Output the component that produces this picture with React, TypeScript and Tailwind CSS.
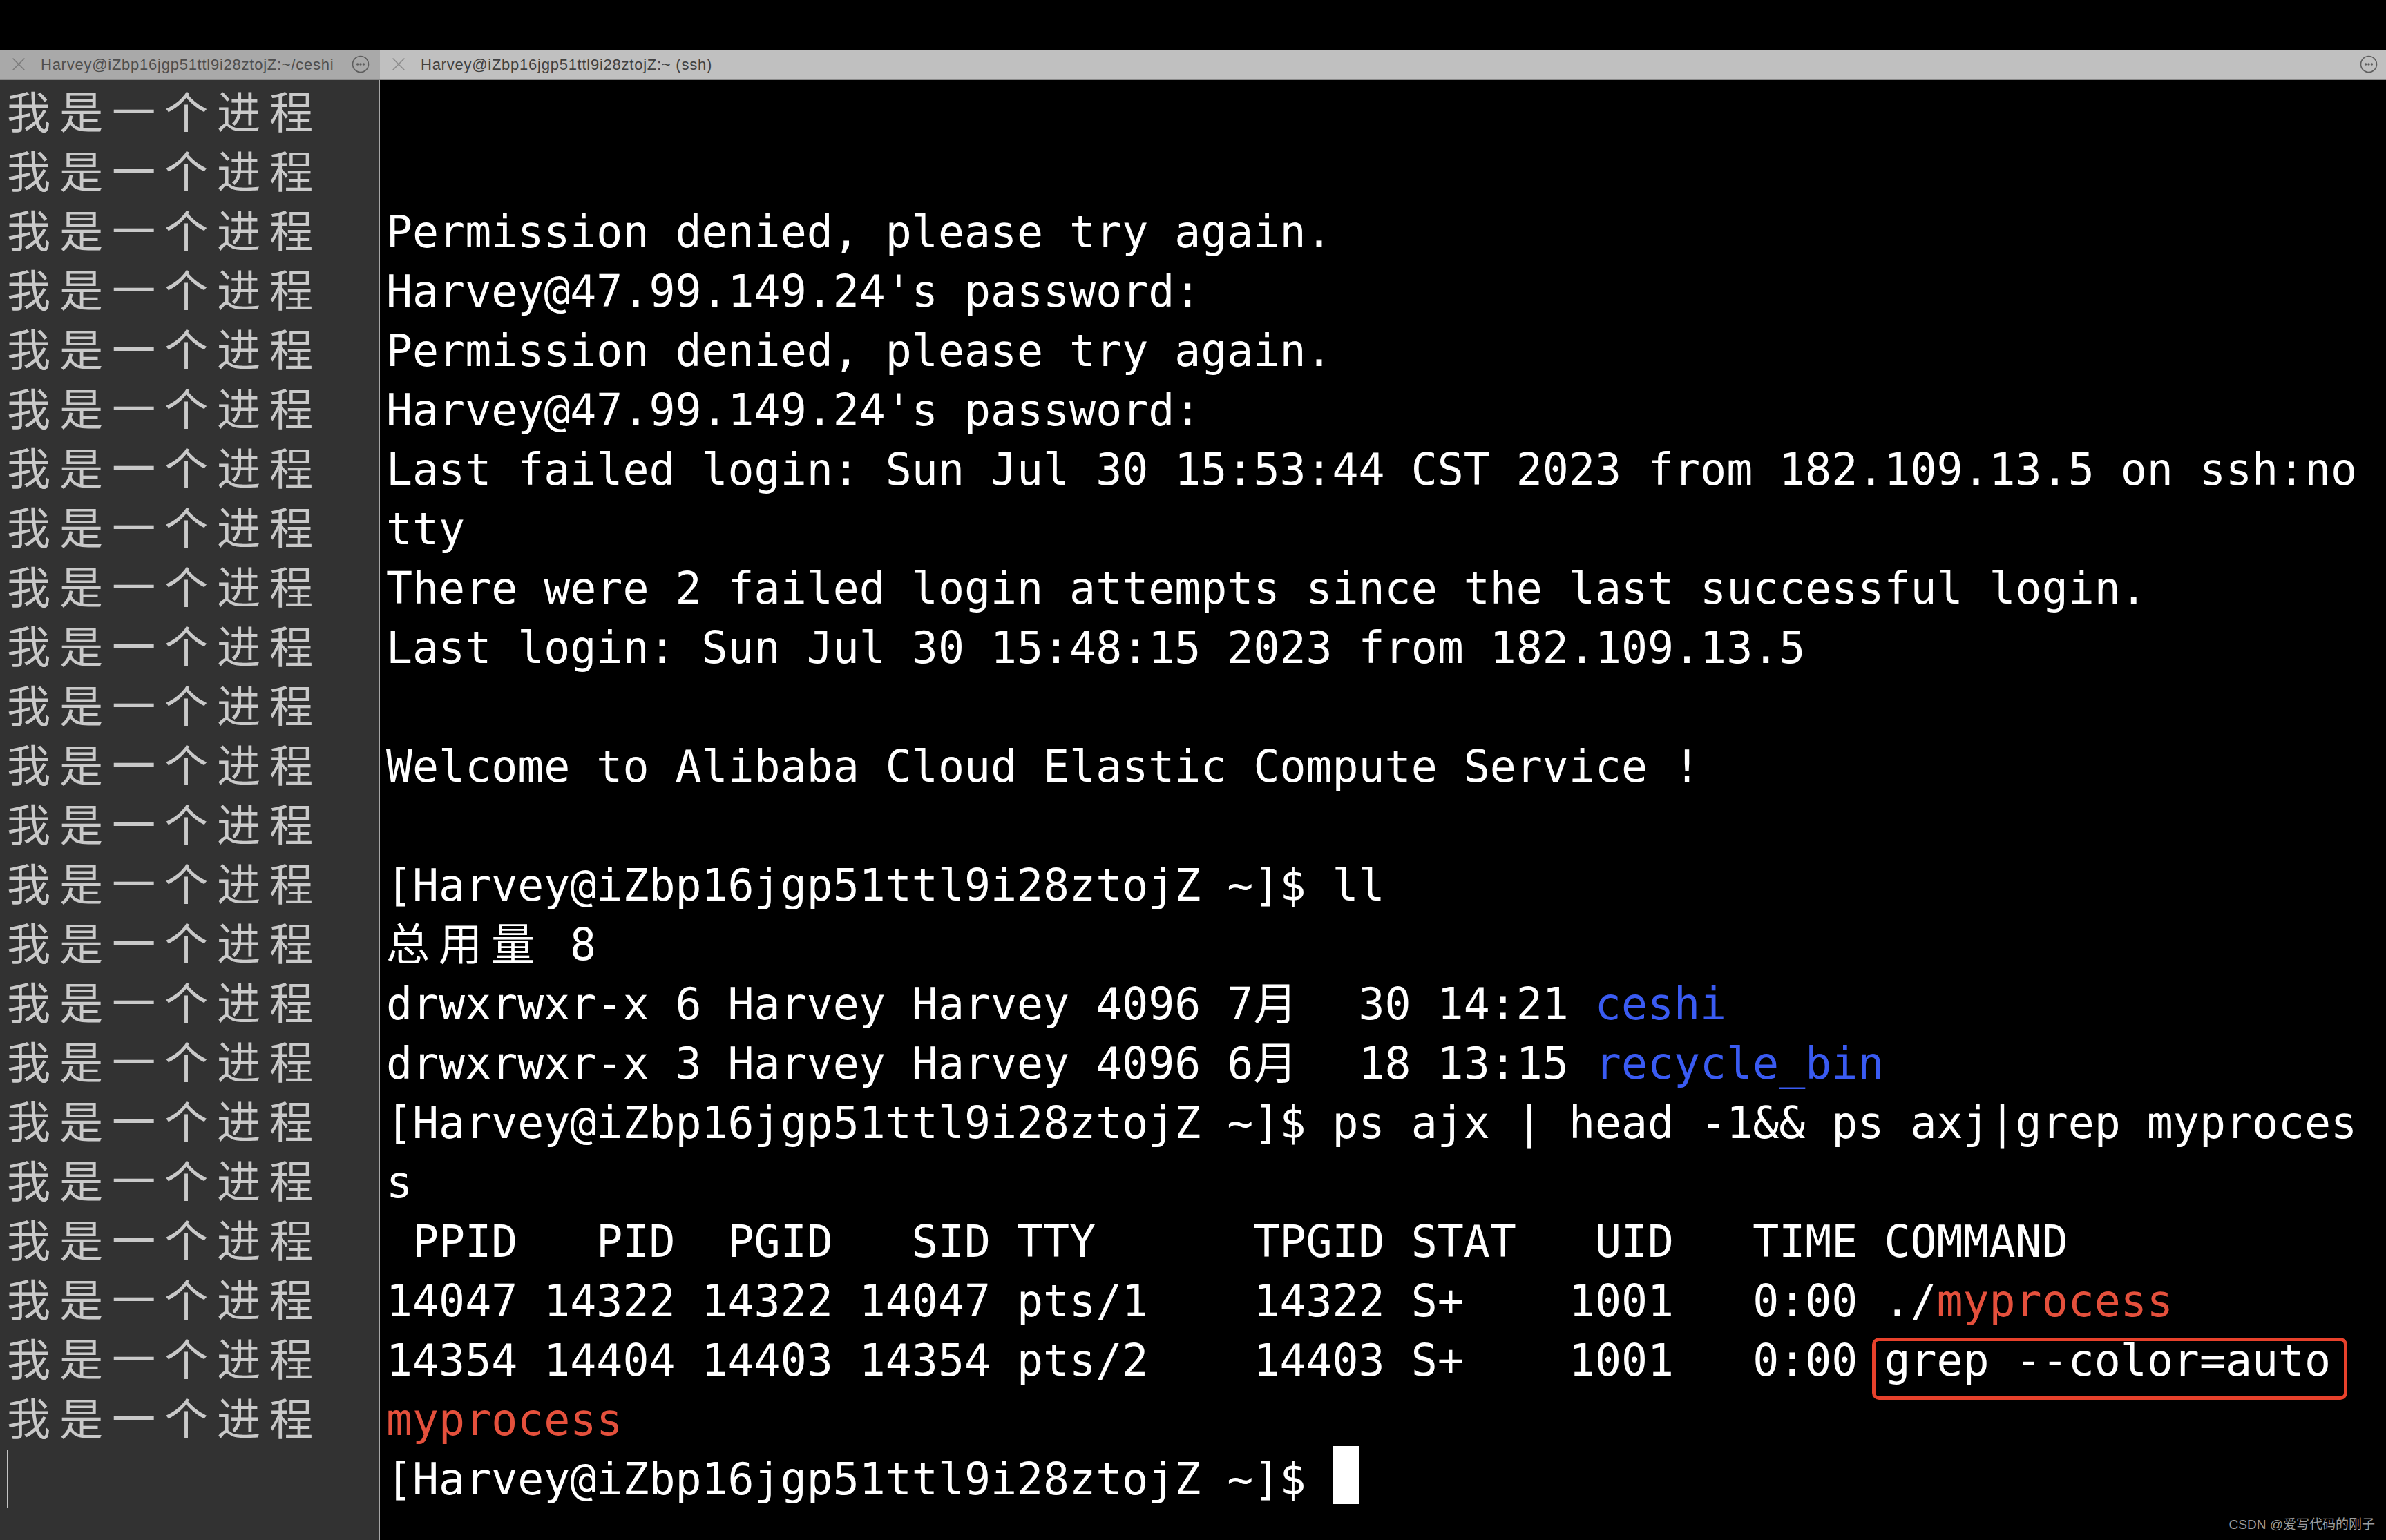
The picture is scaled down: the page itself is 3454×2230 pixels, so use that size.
import React from "react";

type Seg =
  | string
  | { t: string; cls?: string; box?: boolean }
  | { cursor: true };

const RED = "text-[#e4503c]";
const BLUE = "text-[#3a5bf2]";

const mainLines: Seg[][] = [
  [""],
  [""],
  ["Permission denied, please try again."],
  ["Harvey@47.99.149.24's password:"],
  ["Permission denied, please try again."],
  ["Harvey@47.99.149.24's password:"],
  ["Last failed login: Sun Jul 30 15:53:44 CST 2023 from 182.109.13.5 on ssh:no"],
  ["tty"],
  ["There were 2 failed login attempts since the last successful login."],
  ["Last login: Sun Jul 30 15:48:15 2023 from 182.109.13.5"],
  [""],
  ["Welcome to Alibaba Cloud Elastic Compute Service !"],
  [""],
  ["[Harvey@iZbp16jgp51ttl9i28ztojZ ~]$ ll"],
  ["总用量 8"],
  ["drwxrwxr-x 6 Harvey Harvey 4096 7月  30 14:21 ", { t: "ceshi", cls: BLUE }],
  ["drwxrwxr-x 3 Harvey Harvey 4096 6月  18 13:15 ", { t: "recycle_bin", cls: BLUE }],
  ["[Harvey@iZbp16jgp51ttl9i28ztojZ ~]$ ps ajx | head -1&& ps axj|grep myproces"],
  ["s"],
  [" PPID   PID  PGID   SID TTY      TPGID STAT   UID   TIME COMMAND"],
  ["14047 14322 14322 14047 pts/1    14322 S+    1001   0:00 ./", { t: "myprocess", cls: RED }],
  ["14354 14404 14403 14354 pts/2    14403 S+    1001   0:00 ", { t: "grep --color=auto", box: true }],
  [{ t: "myprocess", cls: RED }],
  ["[Harvey@iZbp16jgp51ttl9i28ztojZ ~]$ ", { cursor: true }],
];

const isWide = (ch: string) => /[\u2E80-\u9FFF\uFF00-\uFFEF]/.test(ch);

function renderText(s: string, key: string) {
  const out: React.ReactNode[] = [];
  let buf = "";
  let i = 0;
  for (const ch of Array.from(s)) {
    if (isWide(ch)) {
      if (buf) {
        out.push(<React.Fragment key={key + "-t" + i}>{buf}</React.Fragment>);
        buf = "";
      }
      out.push(
        <span key={key + "-w" + i} className="inline-block w-[76px]">
          {ch}
        </span>
      );
    } else {
      buf += ch;
    }
    i++;
  }
  if (buf) out.push(<React.Fragment key={key + "-end"}>{buf}</React.Fragment>);
  return out;
}

function CloseIcon({ color }: { color: string }) {
  return (
    <svg width="20" height="20" viewBox="0 0 20 20" className="shrink-0">
      <path d="M2 2 L18 18 M18 2 L2 18" stroke={color} strokeWidth="1.6" strokeLinecap="round" fill="none" />
    </svg>
  );
}

function MoreIcon() {
  return (
    <svg width="26" height="26" viewBox="0 0 26 26" className="shrink-0">
      <circle cx="13" cy="13" r="11.5" stroke="#5e5e5e" strokeWidth="1.6" fill="none" />
      <circle cx="8.6" cy="13" r="1.7" fill="#5e5e5e" />
      <circle cx="13" cy="13" r="1.7" fill="#5e5e5e" />
      <circle cx="17.4" cy="13" r="1.7" fill="#5e5e5e" />
    </svg>
  );
}

export default function App() {
  const mono = "font-['DejaVu_Sans_Mono','Noto_Sans_CJK_SC',monospace] text-[63.2px] leading-[86px]";
  return (
    <div className="relative w-[3454px] h-[2230px] bg-black flex flex-col overflow-hidden">
      <div className="h-[72px] shrink-0 bg-black" />
      <div className="h-[44px] shrink-0 flex border-b-2 border-[#8c8c8c] font-['Liberation_Sans',Arial,sans-serif] text-[22px] tracking-[0.75px]">
        <div className="w-[550px] shrink-0 bg-[#a9a9a9] flex items-center pl-[17px] pr-[15px] text-[#4e4e4e]">
          <CloseIcon color="#7b7b7b" />
          <span className="ml-[22px] flex-1 whitespace-nowrap">Harvey@iZbp16jgp51ttl9i28ztojZ:~/ceshi</span>
          <MoreIcon />
        </div>
        <div className="flex-1 bg-[#c0c0c0] flex items-center pl-[17px] pr-[12px] text-[#404040]">
          <CloseIcon color="#8c8c8c" />
          <span className="ml-[22px] flex-1 whitespace-nowrap">Harvey@iZbp16jgp51ttl9i28ztojZ:~ (ssh)</span>
          <MoreIcon />
        </div>
      </div>
      <div className="flex flex-1 min-h-0">
        <div className={`w-[550px] shrink-0 bg-[#323232] border-r-2 border-[#a6a6a6] pl-[10px] pt-[5px] text-[#c9c9c9] whitespace-pre ${mono}`}>
          {Array.from({ length: 23 }).map((_, i) => (
            <div key={i} className="h-[86px]">
              {renderText("我是一个进程", "l" + i)}
            </div>
          ))}
          <div className="h-[86px]">
            <span className="inline-block align-top w-[37px] h-[85px] border-[1.5px] border-[#c4c4c4]" />
          </div>
        </div>
        <div className={`flex-1 bg-black pl-[9px] pt-[5px] text-white whitespace-pre ${mono}`}>
          {mainLines.map((line, li) => (
            <div key={li} className="h-[86px]">
              {line.map((seg, si) => {
                const k = li + "-" + si;
                if (typeof seg === "string") return <React.Fragment key={k}>{renderText(seg, k)}</React.Fragment>;
                if ("cursor" in seg)
                  return <span key={k} className="relative -top-[5px] inline-block align-top w-[38px] h-[84px] bg-white" />;
                if (seg.box)
                  return (
                    <span key={k} className="relative inline-block">
                      {seg.t}
                      <span className="absolute left-[-17px] top-[10px] w-[688px] h-[90px] border-[5px] border-[#e8412b] rounded-[10px]" />
                    </span>
                  );
                return (
                  <span key={k} className={seg.cls}>
                    {seg.t}
                  </span>
                );
              })}
            </div>
          ))}
        </div>
      </div>
      <div className="absolute right-[16px] bottom-[12px] text-[19px] leading-[20px] text-[#9c9c9c] font-['Liberation_Sans','Noto_Sans_CJK_SC',sans-serif]">
        CSDN @爱写代码的刚子
      </div>
    </div>
  );
}
